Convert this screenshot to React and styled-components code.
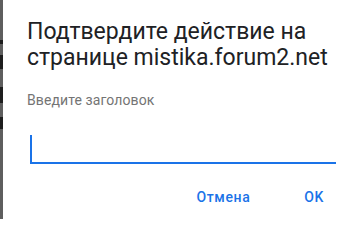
import React from "react";
import styled, { createGlobalStyle } from "styled-components";

const Global = createGlobalStyle`
  html, body { margin: 0; padding: 0; background: #ffffff; }
  body { font-family: Roboto, "Noto Sans", sans-serif; }
`;

const Screen = styled.div`
  display: flex;
  width: 360px;
  height: 219px;
  overflow: hidden;
  background: #ffffff;
`;

const Backdrop = styled.div`
  width: 3px;
  flex: none;
  display: flex;
  flex-direction: column;
  background: #5e5e5e;
`;

const Mark = styled.div`
  height: ${(p) => p.$h}px;
  margin-top: ${(p) => p.$top}px;
  background: ${(p) => p.$c || "#1e1e1e"};
`;

const Dialog = styled.div`
  flex: 1;
  display: flex;
  flex-direction: column;
  padding: 19px 24px 0 24px;
  background: #ffffff;
`;

const Title = styled.h1`
  margin: 0;
  font-family: Roboto, sans-serif;
  font-weight: 400;
  font-size: 23px;
  line-height: 26px;
  color: #202124;
`;

const Label = styled.div`
  margin-top: 19px;
  font-size: 14px;
  line-height: 20px;
  letter-spacing: 0.1px;
  color: #747474;
`;

const Field = styled.div`
  display: flex;
  align-items: flex-end;
  margin: 24px 0 0 3px;
  height: 28px;
  border-bottom: 2px solid #1a73e8;
`;

const Caret = styled.span`
  width: 2px;
  height: 27px;
  background: #1a73e8;
`;

const Actions = styled.div`
  display: flex;
  justify-content: flex-end;
  align-items: center;
  margin-top: 19px;
  padding-right: 12px;
`;

const Action = styled.button`
  border: 0;
  background: transparent;
  padding: 6px 0;
  margin-left: ${(p) => p.$gap || 0}px;
  font-family: Roboto, sans-serif;
  font-weight: 500;
  font-size: 14px;
  line-height: 16px;
  letter-spacing: 0.6px;
  color: #1a73e8;
  cursor: pointer;
`;

export default function App() {
  return (
    <>
      <Global />
      <Screen>
        <Backdrop>
          <Mark $top={40} $h={4} />
          <Mark $top={11} $h={14} />
          <Mark $top={18} $h={16} />
          <Mark $top={14} $h={12} />
        </Backdrop>
        <Dialog>
          <Title>
            Подтвердите действие на
            <br />
            странице mistika.forum2.net
          </Title>
          <Label>Введите заголовок</Label>
          <Field>
            <Caret />
          </Field>
          <Actions>
            <Action>Отмена</Action>
            <Action $gap={54}>OK</Action>
          </Actions>
        </Dialog>
      </Screen>
    </>
  );
}
